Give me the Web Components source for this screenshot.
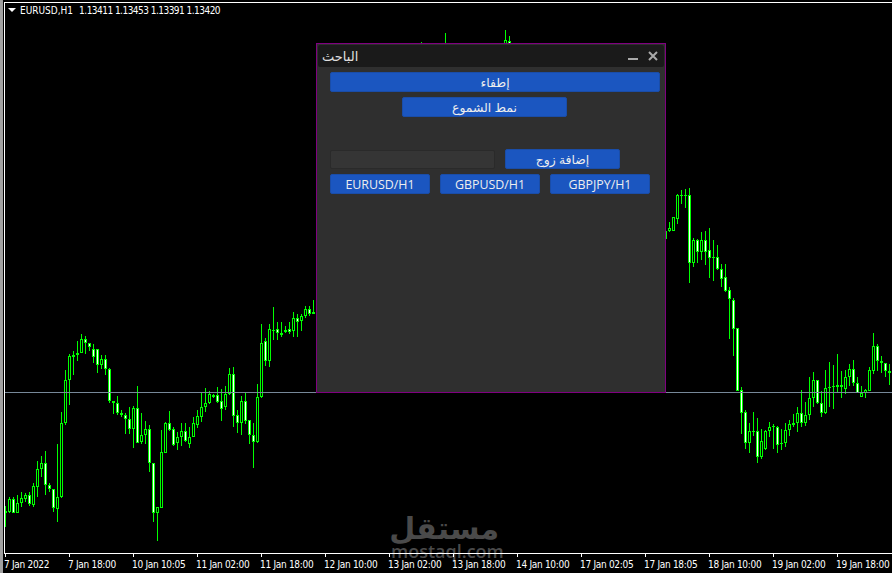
<!DOCTYPE html>
<html lang="en">
<head>
<meta charset="utf-8">
<title>Chart</title>
<style>
  html, body { margin: 0; background: #000; }
  body { width: 892px; height: 573px; overflow: hidden; }
</style>
</head>
<body>
<chart-window symbol="EURUSD,H1" prices="1.13411 1.13453 1.13391 1.13420">
  <trade-panel slot="panel" heading="الباحث">
    <panel-button style="--w:330px">إطفاء</panel-button>
    <panel-button style="--w:165px;--ml:72px">نمط الشموع</panel-button>
    <div style="display:flex;gap:10px;margin-top:27px;align-items:flex-start">
      <panel-input></panel-input>
      <panel-button style="--w:115px">إضافة زوج</panel-button>
    </div>
    <div style="display:flex;gap:10px">
      <panel-button style="--w:100px">EURUSD/H1</panel-button>
      <panel-button style="--w:100px">GBPUSD/H1</panel-button>
      <panel-button style="--w:100px">GBPJPY/H1</panel-button>
    </div>
  </trade-panel>
</chart-window>

<script>
const UI_FONT = '"DejaVu Sans Condensed", "DejaVu Sans", sans-serif';

// candles read off the chart: [high, low, bodyTop, bodyBottom, bear]
const LEFT = [
  [558,620,574,580,1],[530,578,537,575,0],[530,580,538,578,1],[525,578,550,578,0],[517,560,535,550,0],
  [520,545,526,536,0],[516,558,526,552,1],[490,560,498,554,0],[422,532,448,500,0],[408,470,428,448,0],
  [394,525,428,496,1],[490,515,496,508,1],[506,575,508,564,1],[372,605,532,566,0],[277,535,310,532,0],
  [150,316,180,310,0],[102,255,108,180,0],[92,165,106,110,1],[62,122,100,106,0],[42,100,58,100,0],
  [48,102,58,70,1],[68,92,70,82,1],[72,130,88,110,1],[100,160,88,136,1],[105,148,118,136,0],
  [105,165,118,146,1],[145,248,146,244,1],[243,282,244,248,1],[228,285,248,280,1],[270,292,280,284,1],
  [280,342,284,298,1],[262,342,296,326,1],[258,385,265,326,0],[198,368,265,368,1],[278,372,344,366,0],
  [304,372,328,344,0],[316,455,328,428,1],[428,605,428,578,1],[560,662,562,578,0],[330,565,397,563,0],
  [305,400,310,400,0],[274,332,310,330,1],[322,378,328,374,1],[336,390,352,370,0],[308,378,334,352,0],
  [308,366,334,364,1],[322,384,350,372,0],[292,350,310,350,0],[270,325,288,314,0],[218,305,262,290,0],
  [205,275,250,262,0],[212,252,222,250,0],[222,235,224,230,1],[202,248,226,246,1],[208,302,244,266,1],
  [198,270,222,262,0],[144,225,162,222,0],[140,322,162,288,1],[270,340,286,310,1],[228,345,244,310,0],
  [215,312,244,302,1],[300,372,300,344,1],[308,444,344,366,1],[192,370,232,365,0],[12,234,68,232,0]
];
const MIDDLE = [
  [338,366,341,361,1],[324,367,329,361,0],[307,340,330,331,1],[322,340,329,333,1],[322,337,333,335,1],
  [326,333,330,332,1],[322,334,329,332,1],[312,337,318,331,0],[314,337,318,322,1],[314,331,316,321,0],
  [306,318,309,316,0],[306,316,309,314,1],[300,314,312,314,1]
];
const RIGHT = [
  [126,155,145,153,0],[112,152,112,152,0],[42,132,46,116,0],[30,72,46,48,1],[27,84,46,48,1],
  [25,308,46,250,1],[175,260,180,250,0],[178,250,180,215,1],[155,240,180,215,0],[153,255,180,215,1],
  [145,294,210,233,1],[180,302,232,234,1],[195,270,232,268,1],[252,320,268,296,1],[252,335,292,332,1],
  [320,476,330,358,1],[355,527,360,446,1],[445,632,445,632,1],[622,762,630,698,1],[690,806,697,790,1],
  [730,818,754,790,0],[696,768,754,756,1],[714,850,754,830,1],[748,836,784,830,0],[750,810,752,808,0],
  [726,772,742,754,0],[732,808,738,740,1],[738,818,740,794,1],[748,810,790,792,1],[730,802,750,790,0],
  [720,768,733,750,0],[702,742,730,734,1],[682,756,700,730,0],[630,740,700,728,1],[666,738,706,728,0],
  [590,720,655,706,0],[576,680,600,655,0],[600,672,600,670,1],[632,710,668,700,1],[570,702,625,698,0],
  [546,680,621,623,1],[555,686,618,622,1],[522,640,616,620,1],[572,654,614,622,1],[570,642,592,626,0],
  [552,618,568,592,0],[540,618,568,610,1],[590,640,610,638,1],[618,650,640,650,0],[626,654,630,640,0],
  [562,632,570,632,0],[458,582,498,572,0],[492,574,498,542,1],[528,578,542,550,1],[548,590,550,572,1],
  [552,614,572,580,1]
];

class CandleChart extends HTMLElement {
  constructor() {
    super();
    this.attachShadow({ mode: "open" });

    const parts = [];
    const put = (x, [hi, lo, top, bot, bear]) => {
      const h = Math.round(hi), t = Math.round(top);
      const b = Math.max(Math.round(bot), t + 1);
      parts.push(`<rect x="${x}" y="${h}" width="1" height="${Math.round(lo) - h}" fill="#0f0"/>`);
      parts.push(`<rect x="${x - 1}" y="${t}" width="3" height="${b - t}" fill="#0f0"/>`);
      if (b - t > 2) {
        parts.push(`<rect x="${x}" y="${t + 1}" width="1" height="${b - t - 2}" fill="${bear ? "#fff" : "#000"}"/>`);
      }
    };

    LEFT.forEach((c, i) => put(5 + 4 * i, [320 + c[0] / 3, 320 + c[1] / 3, 320 + c[2] / 3, 320 + c[3] / 3, c[4]]));
    MIDDLE.forEach((c, i) => put(265 + 4 * i, c));
    RIGHT.forEach((c, i) => put(669 + 4 * i, [180 + c[0] / 3, 180 + c[1] / 3, 180 + c[2] / 3, 180 + c[3] / 3, c[4]]));

    // bits that stick out above and beside the panel
    parts.push(`<rect x="666" y="231" width="1" height="8" fill="#0f0"/>`);
    parts.push(`<rect x="421" y="42" width="1" height="2" fill="#0f0"/>`);
    parts.push(`<rect x="445" y="33" width="1" height="11" fill="#0f0"/>`);
    put(505, [30, 44, 40, 44, 0]);
    put(509, [36, 44, 41, 44, 1]);

    this.shadowRoot.innerHTML = `
      <style>
        :host { display: block; position: absolute; left: -5px; top: -3px; }
        svg { display: block; }
        .price { fill: #778899; }
      </style>
      <svg width="892" height="552" viewBox="0 0 892 552" shape-rendering="crispEdges" aria-hidden="true">
        ${parts.join("")}
        <rect class="price" x="5" y="392" width="887" height="1"/>
      </svg>
    `;
  }
}

class TimeAxis extends HTMLElement {
  constructor() {
    super();
    this.attachShadow({ mode: "open" });
    const labels = [
      "7 Jan 2022", "7 Jan 18:00", "10 Jan 10:05", "11 Jan 02:00", "11 Jan 18:00",
      "12 Jan 10:00", "13 Jan 02:00", "13 Jan 18:00", "14 Jan 10:00", "17 Jan 02:05",
      "17 Jan 18:05", "18 Jan 10:00", "19 Jan 02:00", "19 Jan 18:00"
    ];
    this.shadowRoot.innerHTML = `
      <style>
        :host {
          display: flex;
          position: relative;
          height: 17px;
          font: 10px/12px ${UI_FONT};
          letter-spacing: -.3px;
          color: #fff;
          white-space: nowrap;
        }
        .cell { flex: 0 0 64px; position: relative; padding-top: 5px; text-indent: -1px; }
        .cell::before {
          content: "";
          position: absolute;
          left: 0;
          top: 0;
          width: 1px;
          height: 3px;
          background: #fff;
        }
      </style>
      ${labels.map(l => `<div class="cell">${l}</div>`).join("")}
    `;
  }
}

class ChartWindow extends HTMLElement {
  constructor() {
    super();
    this.attachShadow({ mode: "open" });
    this.shadowRoot.innerHTML = `
      <style>
        :host {
          display: block;
          position: relative;
          box-sizing: border-box;
          width: 892px;
          height: 573px;
          padding: 2px 0 0 1px;
          background: #000;
          border-left: 3px solid #a0a0a0;
          overflow: hidden;
          font-family: ${UI_FONT};
        }
        .plot {
          position: relative;
          height: 552px;
          box-sizing: border-box;
          border-top: 1px solid #fff;
          border-left: 1px solid #fff;
          border-bottom: 1px solid #fff;
          overflow: hidden;
        }
        .info {
          position: absolute;
          left: 15px;
          top: 1px;
          display: flex;
          gap: 6px;
          font-size: 10px;
          line-height: 14px;
          color: #fff;
          white-space: pre;
        }
        #px { letter-spacing: -.53px; }
        .arrow {
          width: 0;
          height: 0;
          margin: 4px 0 0 -12px;
          border: 4px solid transparent;
          border-top-color: #fff;
          border-bottom: 0;
          position: absolute;
        }
        .axis { position: relative; margin-left: 1px; }
        .mark {
          position: absolute;
          left: 388px;
          top: 513px;
          width: 108px;
          color: #4a4a4a;
          text-align: center;
          pointer-events: none;
        }
        .mark b { display: block; height: 31px; font: bold 30px/31px "DejaVu Sans", sans-serif; }
        .mark span { display: block; font: 600 18px/14px "Open Sans", sans-serif; }
        ::slotted([slot="panel"]) { position: absolute; left: 313px; top: 43px; }
      </style>
      <div class="mark"><b lang="ar" dir="rtl">مستقل</b><span>mostaql.com</span></div>
      <div class="plot">
        <candle-chart></candle-chart>
        <div class="info"><i class="arrow"></i><span id="sym"></span><span id="px"></span></div>
      </div>
      <time-axis class="axis"></time-axis>
      <slot name="panel"></slot>
    `;
    this.shadowRoot.getElementById("sym").textContent = this.getAttribute("symbol");
    this.shadowRoot.getElementById("px").textContent = this.getAttribute("prices");
  }
}

class TradePanel extends HTMLElement {
  constructor() {
    super();
    this.attachShadow({ mode: "open" });
    this.shadowRoot.innerHTML = `
      <style>
        :host {
          display: block;
          box-sizing: border-box;
          width: 350px;
          height: 350px;
          border: 1px solid #800080;
          padding: 1px;
          background: #2f2f2f;
          font-family: "DejaVu Sans", sans-serif;
        }
        .bar {
          display: flex;
          align-items: center;
          height: 22px;
          padding: 0 6px 0 4px;
          background: #1a1a1a;
          border-radius: 2px;
          color: #e0e0e0;
          font-size: 13px;
        }
        .bar svg { display: block; }
        .title { flex: 1; }
        .body {
          display: flex;
          flex-direction: column;
          align-items: flex-start;
          gap: 5px;
          padding: 5px 0 0 12px;
        }
      </style>
      <div class="bar">
        <span class="title" lang="ar" id="title"></span>
        <svg width="10" height="22" viewBox="0 0 10 22" style="margin-right:10px"><rect x="0" y="13" width="10" height="2" fill="#a9a9a9"/></svg>
        <svg width="10" height="10" viewBox="0 0 10 10"><path d="M1 1 L9 9 M9 1 L1 9" stroke="#a9a9a9" stroke-width="2" fill="none"/></svg>
      </div>
      <div class="body"><slot></slot></div>
    `;
    this.shadowRoot.getElementById("title").textContent = this.getAttribute("heading");
  }
}

class PanelButton extends HTMLElement {
  constructor() {
    super();
    this.attachShadow({ mode: "open" });
    this.shadowRoot.innerHTML = `
      <style>
        :host {
          display: block;
          box-sizing: border-box;
          width: var(--w, 100px);
          height: 20px;
          margin-left: var(--ml, 0);
          background: #1b56c0;
          border: 1px solid #1a4da8;
          border-radius: 2px;
          color: #eee;
          font: 12.4px/20px "Open Sans", "DejaVu Sans", sans-serif;
          text-align: center;
        }
      </style>
      <slot></slot>
    `;
  }
}

class PanelInput extends HTMLElement {
  constructor() {
    super();
    this.attachShadow({ mode: "open" });
    this.shadowRoot.innerHTML = `
      <style>
        :host {
          display: block;
          box-sizing: border-box;
          width: 165px;
          height: 19px;
          margin-top: 1px;
          background: #353535;
          border: 1px solid #2a2a2a;
          border-radius: 2px;
        }
      </style>
    `;
  }
}

customElements.define("candle-chart", CandleChart);
customElements.define("time-axis", TimeAxis);
customElements.define("chart-window", ChartWindow);
customElements.define("trade-panel", TradePanel);
customElements.define("panel-button", PanelButton);
customElements.define("panel-input", PanelInput);
</script>
</body>
</html>
